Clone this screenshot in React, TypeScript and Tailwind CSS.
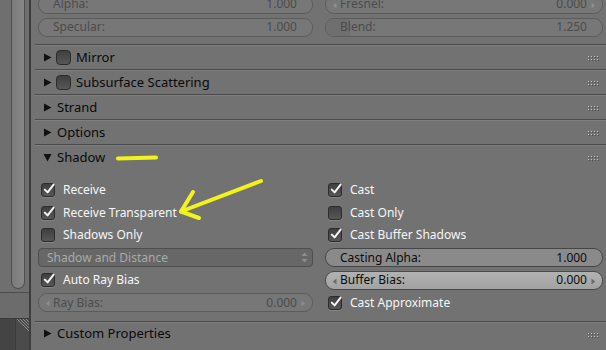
import React from "react";

const Check = ({ on }: { on: boolean }) => (
  <span className="relative w-[14px] h-[14px] shrink-0 rounded-[3px] border border-[#2c2c2c] bg-linear-to-b from-[#3f3f3f] to-[#575757] shadow-[0_1px_0_#858585]">
    {on && (
      <svg className="absolute left-[0px] top-[-2px]" width="14" height="14" viewBox="0 0 14 14">
        <path d="M2.8 7.6 L5.6 10.4 L11.6 2.6" stroke="#f4f4f4" strokeWidth="2" fill="none" strokeLinecap="round" strokeLinejoin="round" />
      </svg>
    )}
  </span>
);

const CheckRow = ({ on, label }: { on: boolean; label: string }) => (
  <div className="h-[20px] flex items-center pl-[3px]">
    <Check on={on} />
    <span className="ml-[8px] text-[12px] text-[#f6f6f6] leading-none">{label}</span>
  </div>
);

type Variant = "disabled" | "normal" | "hover";

const Field = ({
  label,
  value,
  variant,
  arrows,
  fill,
}: {
  label: string;
  value: string;
  variant: Variant;
  arrows?: boolean;
  fill?: boolean;
}) => {
  const box =
    variant === "disabled"
      ? "border-[#5c5c5c] bg-[#777777] text-[#4c4c4c]"
      : variant === "normal"
      ? "border-[#454545] bg-[#8a8a8a] text-[#0c0c0c]"
      : "border-[#4a4a4a] bg-linear-to-b from-[#b2b2b2] to-[#a2a2a2] text-[#0c0c0c]";
  const arrowCol = variant === "hover" ? "#6a6a6a" : "#8c8c8c";
  return (
    <div className="h-[20px] flex items-center">
      <div className={`relative w-full h-[19px] rounded-[9px] border ${box} flex items-center justify-between pl-[14px] pr-[15px] text-[12px] leading-none overflow-hidden`}>
        {fill && <div className="absolute left-0 top-0 bottom-0 w-[24px] bg-[#6f6f6f]" />}
        {arrows && (
          <svg className="absolute left-[6px] top-[6px]" width="5" height="7" viewBox="0 0 5 7">
            <path d="M4.5 0.5 L0.8 3.5 L4.5 6.5 Z" fill={arrowCol} />
          </svg>
        )}
        <span className="relative">{label}</span>
        <span className="relative">{value}</span>
        {arrows && (
          <svg className="absolute right-[6px] top-[6px]" width="5" height="7" viewBox="0 0 5 7">
            <path d="M0.5 0.5 L4.2 3.5 L0.5 6.5 Z" fill={arrowCol} />
          </svg>
        )}
      </div>
    </div>
  );
};

const Grip = () => (
  <svg width="12" height="6" viewBox="0 0 12 6" className="mt-[4px]">
    {[0, 1, 2, 3].map((c) =>
      [0, 1].map((r) => (
        <g key={`${c}-${r}`}>
          <rect x={c * 3 + 1} y={r * 3 + 1} width="1" height="1" fill="#4e4e4e" />
          <rect x={c * 3} y={r * 3} width="1" height="1" fill="#c4c4c4" />
        </g>
      ))
    )}
  </svg>
);

const Tri = ({ open }: { open?: boolean }) =>
  open ? (
    <svg width="9" height="9" viewBox="0 0 9 9" className="shrink-0">
      <path d="M0.5 1 L8.5 1 L4.5 8.5 Z" fill="#111" />
    </svg>
  ) : (
    <svg width="9" height="9" viewBox="0 0 9 9" className="shrink-0">
      <path d="M1 0.5 L8.5 4.5 L1 8.5 Z" fill="#111" />
    </svg>
  );

const Header = ({ label, open, check }: { label: string; open?: boolean; check?: boolean }) => (
  <div className="ml-[4px] h-[25px] border-t border-[#4a4a4a] shadow-[inset_0_1px_0_#7f7f7f] flex items-center pl-[8px] pr-[6px]">
    <Tri open={open} />
    {check && (
      <span className="ml-[4px] w-[15px] h-[15px] rounded-[4px] border border-[#2c2c2c] bg-linear-to-b from-[#3f3f3f] to-[#575757]" />
    )}
    <span className="ml-[5px] text-[13px] text-[#0a0a0a] leading-none">{label}</span>
    <div className="flex-1" />
    <Grip />
  </div>
);

export default function App() {
  return (
    <div className="relative w-[606px] h-[350px] overflow-hidden flex bg-[#727272] font-['Noto_Sans','DejaVu_Sans',sans-serif]">
      {/* left strip */}
      <div className="w-[29px] shrink-0 flex flex-col bg-[#6f6f6f]">
        <div className="h-[292px] pl-[11px]">
          <div className="w-[14px] h-[289px] rounded-b-[7px] border border-t-0 border-[#4f4f4f] bg-linear-to-r from-[#7b7b7b] to-[#878787]" />
        </div>
        <div className="h-[1px] bg-[#4c4c4c]" />
        <div className="h-[25px] bg-[#6c6c6c]" />
        <div className="flex-1 flex border-t border-[#3a3a3a]">
          <div className="w-[16px] bg-[#444444] border-r border-[#3a3a3a]" />
          <div className="flex-1 bg-[#4b4b4b] relative">
            <svg className="absolute left-0 top-0" width="13" height="16" viewBox="0 0 13 16">
              {[0, 3, 6, 9].map((o) => (
                <line key={o} x1={1 + o} y1={0} x2={13} y2={12 - o} stroke="#8a8a8a" strokeWidth="1" />
              ))}
            </svg>
          </div>
        </div>
      </div>
      <div className="w-[2px] shrink-0 bg-[#3d3d3d]" />

      {/* main */}
      <div className="flex-1 flex flex-col">
        <div className="mt-[-6px] pl-[7px] pr-[3px] grid grid-cols-[275px_278px] gap-x-[12px] gap-y-[3px]">
          <Field label="Alpha:" value="1.000" variant="disabled" />
          <Field label="Fresnel:" value="0.000" variant="disabled" arrows />
          <Field label="Specular:" value="1.000" variant="disabled" />
          <Field label="Blend:" value="1.250" variant="disabled" fill />
        </div>
        <div className="h-[7px]" />
        <Header label="Mirror" check />
        <Header label="Subsurface Scattering" check />
        <Header label="Strand" />
        <Header label="Options" />
        <Header label="Shadow" open />
        <div className="pt-[11px] pb-[8px] pl-[7px] pr-[3px] grid grid-cols-[275px_278px] gap-x-[12px]">
          <div className="flex flex-col gap-y-[2.6px]">
            <CheckRow on label="Receive" />
            <CheckRow on label="Receive Transparent" />
            <CheckRow on={false} label="Shadows Only" />
            <div className="h-[20px] flex items-center">
              <div className="w-full h-[19px] rounded-[4px] border border-[#4e4e4e] bg-[#676767] flex items-center pl-[8px] pr-[3px] text-[12px] text-[#a9a9a9] leading-none">
                <span>Shadow and Distance</span>
                <div className="flex-1" />
                <svg width="9" height="13" viewBox="0 0 9 13">
                  <path d="M4.5 1.5 L7.5 5 L1.5 5 Z" fill="#8e8e8e" />
                  <path d="M4.5 11.5 L7.5 8 L1.5 8 Z" fill="#8e8e8e" />
                </svg>
              </div>
            </div>
            <CheckRow on label="Auto Ray Bias" />
            <Field label="Ray Bias:" value="0.000" variant="disabled" arrows />
          </div>
          <div className="flex flex-col gap-y-[2.6px]">
            <CheckRow on label="Cast" />
            <CheckRow on={false} label="Cast Only" />
            <CheckRow on label="Cast Buffer Shadows" />
            <Field label="Casting Alpha:" value="1.000" variant="normal" />
            <Field label="Buffer Bias:" value="0.000" variant="hover" arrows />
            <CheckRow on label="Cast Approximate" />
          </div>
        </div>
        <Header label="Custom Properties" />
      </div>

      {/* annotations */}
      <svg className="absolute left-0 top-0 pointer-events-none" width="606" height="350" viewBox="0 0 606 350">
        <path d="M118 158.5 L156 157.5" stroke="#f3f31c" strokeWidth="4" strokeLinecap="round" fill="none" />
        <path d="M261 181 L181 211.5" stroke="#f3f31c" strokeWidth="4" strokeLinecap="round" fill="none" />
        <path d="M193 192 L181 211.5 L199 218" stroke="#f3f31c" strokeWidth="4" strokeLinecap="round" strokeLinejoin="round" fill="none" />
      </svg>
    </div>
  );
}
